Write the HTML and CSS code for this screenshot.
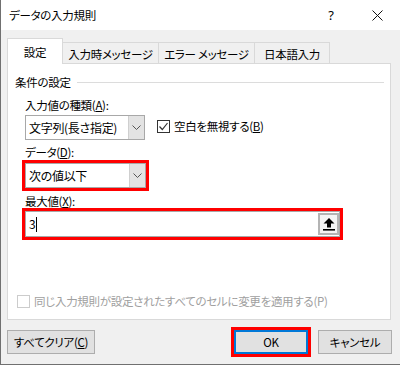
FILE: index.html
```html
<!DOCTYPE html>
<html lang="ja">
<head>
<meta charset="utf-8">
<title>データの入力規則</title>
<link rel="stylesheet" href="styles.css">
</head>
<body>
<div class="window">
  <div class="titlebar">
    <span class="title">データの入力規則</span>
    <span class="tb-btn help">?</span>
    <span class="tb-btn close">
      <svg width="11" height="11" viewBox="0 0 11 11"><path d="M0.5 0.5 L10.5 10.5 M10.5 0.5 L0.5 10.5" stroke="#111" stroke-width="1" fill="none"/></svg>
    </span>
  </div>
  <div class="content">
    <div class="tabs">
      <div class="tab active">設定</div>
      <div class="tab tab-msg">入力時メッセージ</div>
      <div class="tab tab-err">エラー メッセージ</div>
      <div class="tab tab-ime">日本語入力</div>
    </div>
    <div class="panel">
      <div class="legend"><span>条件の設定</span><span class="rule"></span></div>
      <div class="group">
        <div class="label lbl-type">入力値の種類(<u>A</u>):</div>
        <div class="row">
          <div class="combo combo-type">
            <span class="combo-text">文字列(長さ指定)</span>
            <span class="drop"><svg width="9" height="5" viewBox="0 0 9 5"><path d="M0.5 0.5 L4.5 4.5 L8.5 0.5" stroke="#555" stroke-width="1" fill="none"/></svg></span>
          </div>
          <div class="check">
            <span class="box"><svg width="11" height="11" viewBox="0 0 11 11"><path d="M1.5 5.5 L4.3 8.5 L9.5 2" stroke="#333" stroke-width="1.2" fill="none"/></svg></span>
            <span>空白を無視する(<u>B</u>)</span>
          </div>
        </div>
        <div class="label lbl-data">データ(<u>D</u>):</div>
        <div class="combo combo-data hl">
          <span class="combo-text">次の値以下</span>
          <span class="drop"><svg width="9" height="5" viewBox="0 0 9 5"><path d="M0.5 0.5 L4.5 4.5 L8.5 0.5" stroke="#555" stroke-width="1" fill="none"/></svg></span>
        </div>
        <div class="label lbl-max">最大値(<u>X</u>):</div>
        <div class="field hl">
          <span class="value">3</span><span class="caret"></span>
          <span class="ref-btn"><svg width="12" height="13" viewBox="0 0 12 13"><path d="M6 0 L11.5 5.5 H8 V9.5 H4 V5.5 H0.5 Z" fill="#000"/><rect x="0" y="11" width="12" height="1.6" fill="#000"/></svg></span>
        </div>
      </div>
      <div class="apply-all"><span class="box disabled"></span><span>同じ入力規則が設定されたすべてのセルに変更を適用する(P)</span></div>
    </div>
    <div class="buttons">
      <button class="btn clear">すべてクリア(<u>C</u>)</button>
      <span class="spacer"></span>
      <button class="btn ok hl">OK</button>
      <button class="btn cancel">キャンセル</button>
    </div>
  </div>
</div>
</body>
</html>
```

FILE: styles.css
```css
html, body {
  margin: 0;
  padding: 0;
  background: #ffffff;
}

.window {
  width: 400px;
  height: 365px;
  box-sizing: border-box;
  border-left: 1px solid #707070;
  border-bottom: 1px solid #707070;
  background: #f0f0f0;
  font-family: "Noto Sans CJK JP", "Noto Sans", sans-serif;
  font-size: 11.5px;
  letter-spacing: -0.3px;
  line-height: 16px;
  color: #000;
  font-feature-settings: "palt";
  display: flex;
  flex-direction: column;
}

.titlebar {
  height: 30px;
  background: #ffffff;
  display: flex;
  align-items: center;
  padding-left: 8px;
}

.title {
  flex: 1;
}

.tb-btn {
  width: 46px;
  height: 30px;
  display: flex;
  align-items: center;
  justify-content: center;
  font-family: "Noto Sans", sans-serif;
  font-size: 13px;
  letter-spacing: 0;
}

.content {
  flex: 1;
  padding: 8px 8px 0 6px;
  display: flex;
  flex-direction: column;
}

.tabs {
  display: flex;
  align-items: flex-end;
  height: 26px;
  margin-bottom: -1px;
}

.tab {
  box-sizing: border-box;
  height: 22px;
  border: 1px solid #d9d9d9;
  border-bottom: none;
  background: #f0f0f0;
  display: flex;
  align-items: center;
  justify-content: center;
  margin-left: -1px;
  white-space: nowrap;
}

.tab.active {
  margin-left: 0;
  width: 56px;
  height: 26px;
  background: #ffffff;
  position: relative;
  z-index: 1;
}

.tab-msg { width: 97px; }
.tab-err { width: 97px; }
.tab-ime { width: 76px; }

.panel {
  box-sizing: border-box;
  width: 384px;
  height: 257px;
  background: #ffffff;
  border: 1px solid #d9d9d9;
  padding: 10px 6px 10px 7px;
  display: flex;
  flex-direction: column;
}

.legend {
  display: flex;
  align-items: center;
  gap: 6px;
}

.rule {
  flex: 1;
  height: 1px;
  background: #dcdcdc;
}

.group {
  margin-left: 10px;
  display: flex;
  flex-direction: column;
  align-items: flex-start;
}

.lbl-type { margin-top: 7px; }
.lbl-data { margin-top: 4px; }
.lbl-max { margin-top: 5px; }

.row {
  display: flex;
  align-items: flex-start;
  margin-top: 2px;
}

.combo {
  box-sizing: border-box;
  height: 25px;
  border: 1px solid #a8a8a8;
  background: #fff;
  display: flex;
  align-items: stretch;
}

.combo-type { width: 120px; }

.combo-data {
  width: 121px;
  margin-top: 3px;
}

.combo-text {
  flex: 1;
  padding-left: 3px;
  display: flex;
  align-items: center;
  white-space: nowrap;
  font-size: 12px;
}

.drop {
  width: 15px;
  background: #e3e3e3;
  border-left: 1px solid #cfcfcf;
  display: flex;
  align-items: center;
  justify-content: center;
}

.hl {
  outline: 3px solid #ff0000;
}

.check {
  display: flex;
  align-items: center;
  gap: 4px;
  margin-left: 12px;
  margin-top: 3px;
}

.box {
  box-sizing: border-box;
  width: 13px;
  height: 13px;
  border: 1px solid #333;
  background: #fff;
  display: flex;
  align-items: center;
  justify-content: center;
}

.box.disabled {
  border-color: #cccccc;
}

.field {
  box-sizing: border-box;
  width: 315px;
  height: 26px;
  margin-top: 2px;
  border: 1px solid #a8a8a8;
  background: #fff;
  display: flex;
  align-items: center;
  padding: 1px 0 1px 3px;
  font-size: 12px;
}

.caret {
  width: 1px;
  height: 15px;
  background: #000;
  margin-left: 1px;
}

.ref-btn {
  margin-left: auto;
  box-sizing: border-box;
  width: 21px;
  height: 22px;
  border: 2px solid #b4b4b4;
  background: #f4f4f4;
  display: flex;
  align-items: center;
  justify-content: center;
}

.apply-all {
  margin-top: auto;
  margin-left: 2px;
  display: flex;
  align-items: center;
  gap: 4px;
  color: #a0a0a0;
  white-space: nowrap;
}

.buttons {
  display: flex;
  margin-top: 10px;
  gap: 10px;
}

.spacer { flex: 1; }

.btn {
  box-sizing: border-box;
  height: 24px;
  border: 1px solid #adadad;
  background: #e1e1e1;
  font-family: inherit;
  font-size: 11.5px;
  letter-spacing: -0.3px;
  font-feature-settings: "palt";
  color: #000;
  padding: 0;
  line-height: 16px;
}

.clear { width: 88px; }

.ok {
  width: 74px;
  border: 2px solid #0078d7;
}

.cancel { width: 74px; }
```
